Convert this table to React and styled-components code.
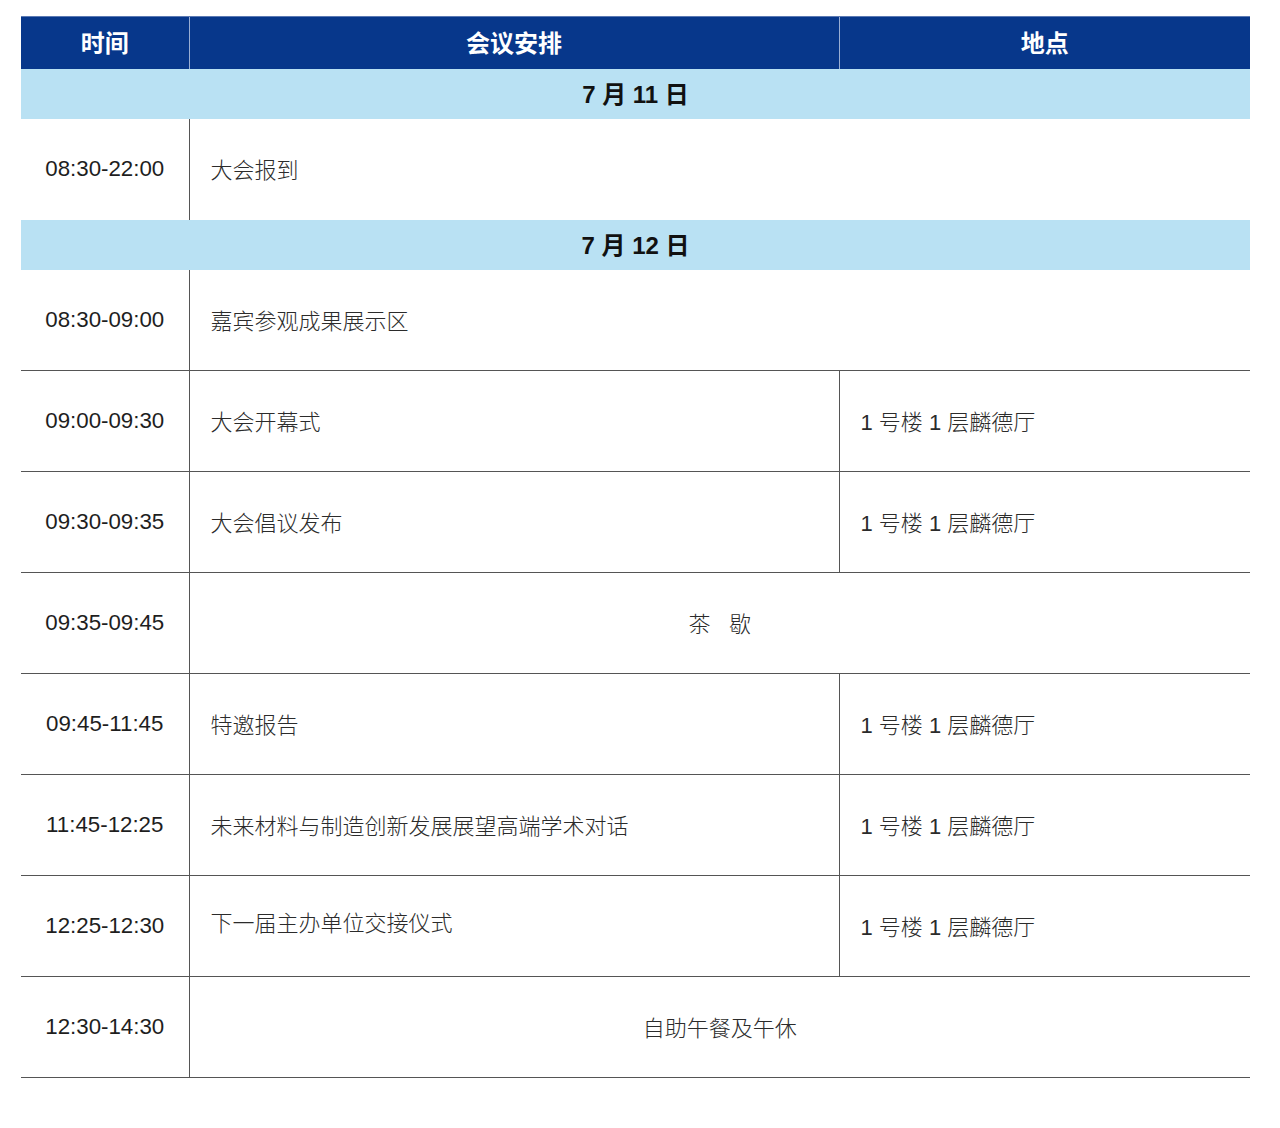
import React from "react";
import styled, { createGlobalStyle } from "styled-components";

const GlobalStyle = createGlobalStyle`
  html, body {
    margin: 0;
    padding: 0;
    background: #ffffff;
  }
  body {
    font-family: "Liberation Sans", "Noto Sans CJK SC", sans-serif;
  }
`;

const Page = styled.div`
  padding: 16px 0 0 21px;
  width: 1280px;
  height: 1128px;
  box-sizing: border-box;
`;

const Table = styled.table`
  border-collapse: collapse;
  table-layout: fixed;
  width: 1229px;
  color: #2b2b2b;
`;

const HeadCell = styled.th`
  background: #07378b;
  color: #ffffff;
  height: 49px;
  padding: 0 0 3px;
  font-size: 24px;
  font-weight: 700;
  text-align: center;
  border-left: 1px solid #9aaed3;
  border-top: 1px solid #5b79b3;
  &:first-child {
    border-left: none;
  }
`;

const DateCell = styled.td`
  background: #b9e1f3;
  height: 47px;
  padding: 0 0 3px;
  font-size: 24px;
  font-weight: 700;
  text-align: center;
  color: #111;
`;

const Row = styled.tr`
  border-bottom: 1px solid ${(p) => (p.$last ? "#ffffff" : "#555")};
`;

const TimeCell = styled.td`
  height: 100px;
  padding: 0;
  font-size: 22.3px;
  text-align: center;
  color: #1e1e1e;
  border-right: 1px solid #555;
`;

const Cell = styled.td`
  height: ${(p) => (p.$lift ? "90px" : "98px")};
  padding: 0 0 ${(p) => (p.$lift ? "10px" : "2px")} ${(p) => (p.$center ? "0" : "21px")};
  font-size: 22px;
  font-weight: 300;
  text-align: ${(p) => (p.$center ? "center" : "left")};
  border-left: ${(p) => (p.$divider ? "1px solid #555" : "none")};
  white-space: nowrap;
`;

const HALL = "1 号楼 1 层麟德厅";

const day12 = [
  { time: "08:30-09:00", title: "嘉宾参观成果展示区", span: true },
  { time: "09:00-09:30", title: "大会开幕式", place: HALL },
  { time: "09:30-09:35", title: "大会倡议发布", place: HALL },
  { time: "09:35-09:45", title: "茶\u00a0\u00a0\u00a0歇", span: true, center: true },
  { time: "09:45-11:45", title: "特邀报告", place: HALL },
  { time: "11:45-12:25", title: "未来材料与制造创新发展展望高端学术对话", place: HALL },
  { time: "12:25-12:30", title: "下一届主办单位交接仪式", place: HALL, lift: true },
  { time: "12:30-14:30", title: "自助午餐及午休", span: true, center: true },
];

function ScheduleRow({ item, last }) {
  return (
    <Row $last={last}>
      <TimeCell>{item.time}</TimeCell>
      {item.span ? (
        <Cell colSpan={2} $center={item.center}>
          {item.title}
        </Cell>
      ) : (
        <>
          <Cell $lift={item.lift}>{item.title}</Cell>
          <Cell $divider>{item.place}</Cell>
        </>
      )}
    </Row>
  );
}

export default function App() {
  return (
    <Page>
      <GlobalStyle />
      <Table>
        <colgroup>
          <col style={{ width: "168px" }} />
          <col style={{ width: "650px" }} />
          <col style={{ width: "411px" }} />
        </colgroup>
        <thead>
          <tr>
            <HeadCell>时间</HeadCell>
            <HeadCell>会议安排</HeadCell>
            <HeadCell>地点</HeadCell>
          </tr>
        </thead>
        <tbody>
          <tr>
            <DateCell colSpan={3}>7 月 11 日</DateCell>
          </tr>
          <ScheduleRow item={{ time: "08:30-22:00", title: "大会报到", span: true }} last />
          <tr>
            <DateCell colSpan={3}>7 月 12 日</DateCell>
          </tr>
          {day12.map((item) => (
            <ScheduleRow key={item.time} item={item} />
          ))}
        </tbody>
      </Table>
    </Page>
  );
}
